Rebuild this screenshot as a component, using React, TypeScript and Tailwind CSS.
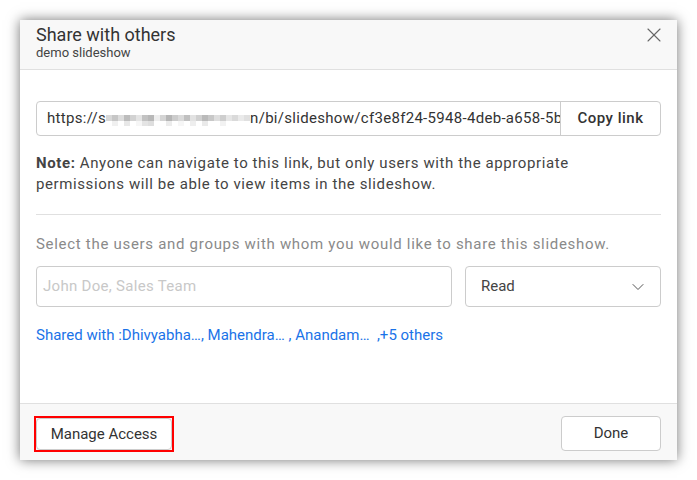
import { ChevronDown, X } from 'lucide-react';

const font = { fontFamily: 'Roboto, "Noto Sans", sans-serif' };

// pixelated (masked) part of the link
const mosaicTop = [
  '#d8d8d8', '#c6c6c6', '#dcdcdc', '#bcbcbc', '#d2d2d2', '#e4e4e4', '#c2c2c2', '#b8b8b8',
  '#eeeeee', '#d4d4d4', '#b6b6b6', '#cccccc', '#dadada', '#c0c0c0', '#e2e2e2', '#d0d0d0',
  '#bababa', '#c8c8c8', '#dedede', '#cecece', '#e6e6e6', '#dadada', '#eaeaea', '#e0e0e0',
];
const mosaicBottom = [
  '#ffffff', '#f0f0f0', '#ffffff', '#e8e8e8', '#ffffff', '#f6f6f6', '#e4e4e4', '#dedede',
  '#ffffff', '#ffffff', '#ececec', '#ffffff', '#f6f6f6', '#ffffff', '#eeeeee', '#ffffff',
  '#eaeaea', '#ffffff', '#ffffff', '#f2f2f2', '#ffffff', '#ffffff', '#ffffff', '#ffffff',
];

export default function App() {
  return (
    <div className="w-[697px] h-[480px] bg-white pt-5 pl-5" style={font}>
      <div className="w-[657px] h-[440px] bg-white flex flex-col shadow-[0_0_12px_rgba(0,0,0,0.55)]">
        {/* header */}
        <div className="h-[50px] bg-[#f8f8f8] border-b border-[#e0e0e0] flex items-start justify-between pl-4 pr-[11px] pt-[4px]">
          <div className="flex flex-col">
            <span className="text-[18px] leading-[22px] text-[#333]">Share with others</span>
            <span className="text-[13px] leading-[15px] text-[#444] mt-[-1px]">demo slideshow</span>
          </div>
          <X className="w-[24px] h-[24px] text-[#666] -mt-[1px]" strokeWidth={1.1} />
        </div>

        {/* body */}
        <div className="flex-1 px-4 pt-[31px]">
          <div className="flex h-[35px] border border-[#cccccc] rounded-[4px] overflow-hidden">
            <div className="flex-1 flex items-center pl-[10px] text-[15px] text-[#333] whitespace-nowrap overflow-hidden tracking-[0.3px]">
              <span>https://s</span>
              <span className="flex flex-col mt-[4px]">
                <span className="flex">
                  {mosaicTop.map((c, i) => (
                    <span key={i} className="w-[6px] h-[6px]" style={{ background: c }} />
                  ))}
                </span>
                <span className="flex">
                  {mosaicBottom.map((c, i) => (
                    <span key={i} className="w-[6px] h-[5px]" style={{ background: c }} />
                  ))}
                </span>
              </span>
              <span>n/bi/slideshow/cf3e8f24-5948-4deb-a658-5b2c</span>
            </div>
            <button className="w-[100px] border-l border-[#cccccc] text-[15px] font-medium text-[#333] tracking-[0.5px]">
              Copy link
            </button>
          </div>

          <p className="mt-[17px] text-[15px] leading-[21px] text-[#444] tracking-[0.6px]">
            <span className="font-bold">Note:</span> Anyone can navigate to this link, but only users with the appropriate
            permissions will be able to view items in the slideshow.
          </p>

          <div className="mt-[19px] border-t border-[#e0e0e0]" />

          <p className="mt-[19px] text-[15px] leading-[20px] text-[#8a8a8a] tracking-[0.7px] whitespace-nowrap">
            Select the users and groups with whom you would like to share this slideshow.
          </p>

          <div className="flex gap-[13px] mt-[12px]">
            <div className="w-[416px] h-[41px] border border-[#cccccc] rounded-[4px] flex items-center pl-[6px] text-[15px] text-[#c8c8c8] tracking-[0.3px]">
              John Doe, Sales Team
            </div>
            <div className="flex-1 h-[41px] border border-[#cccccc] rounded-[4px] flex items-center justify-between pl-[15px] pr-[12px] text-[15px] text-[#444]">
              <span>Read</span>
              <ChevronDown className="w-[20px] h-[20px] text-[#555]" strokeWidth={1.2} />
            </div>
          </div>

          <div className="mt-[17px] text-[15px] text-[#1a73e8] whitespace-pre">
            Shared with :Dhivyabha…, Mahendra… , Anandam…  ,+5 others
          </div>
        </div>

        {/* footer */}
        <div className="h-[57px] bg-[#f8f8f8] border-t border-[#e0e0e0] flex items-start justify-between pl-[14px] pr-4 pt-[12px]">
          <div className="border-2 border-[#ff0000]">
            <button className="h-[32px] w-[136px] bg-white border border-[#cccccc] rounded-[4px] text-[15px] text-[#333] block">
              Manage Access
            </button>
          </div>
          <button className="h-[35px] w-[100px] bg-white border border-[#cccccc] rounded-[4px] text-[15px] text-[#333]">
            Done
          </button>
        </div>
      </div>
    </div>
  );
}
